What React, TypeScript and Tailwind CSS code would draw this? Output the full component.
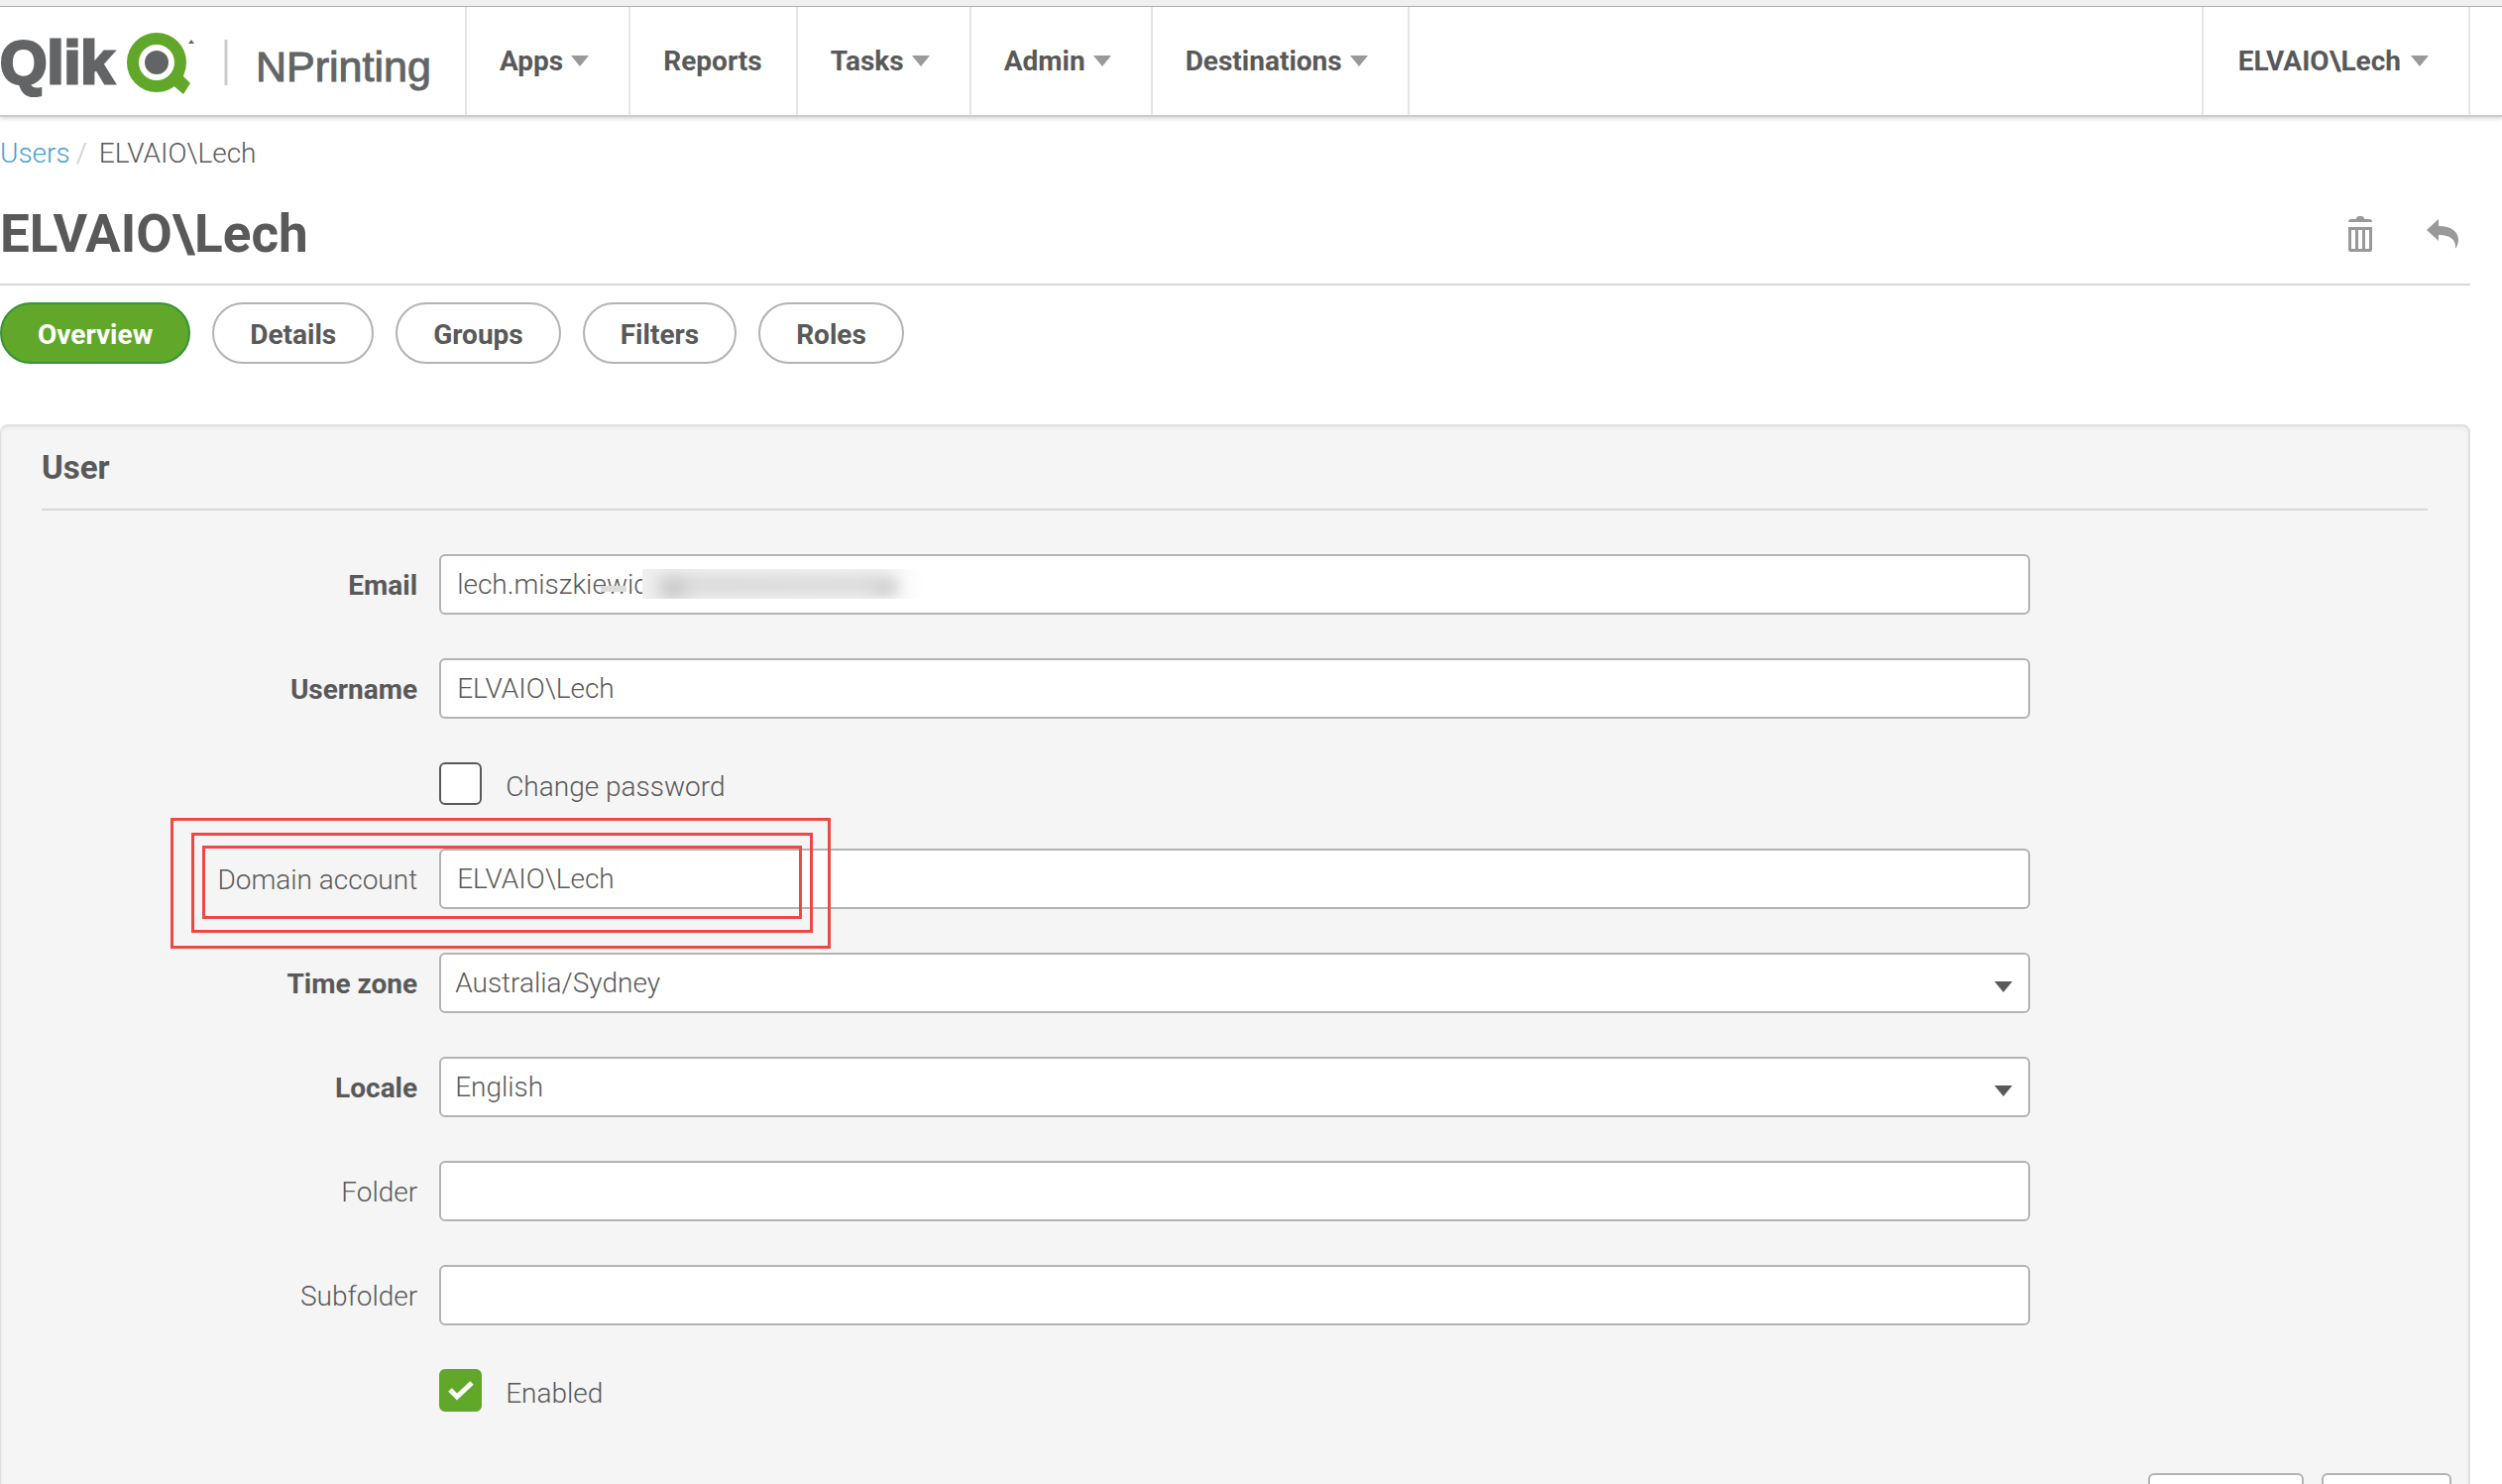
import type { ReactNode } from "react";

const navItems = [
  { label: "Apps", menu: true },
  { label: "Reports", menu: false },
  { label: "Tasks", menu: true },
  { label: "Admin", menu: true },
  { label: "Destinations", menu: true },
];

const tabs = ["Overview", "Details", "Groups", "Filters", "Roles"];

const fieldClass =
  "block h-[61px] w-full rounded-md border-2 border-[#b3b3b3] bg-white px-4 text-[28px] font-light text-[#595959]";

const formButtonClass = "h-[61px] rounded-md border-2 border-[#b3b3b3] bg-white";

function Caret({ className }: { className: string }) {
  return (
    <svg className={className} width="18" height="11" viewBox="0 0 18 11" aria-hidden="true">
      <path d="M0 0h18L9 11z" fill="currentColor" />
    </svg>
  );
}

function Logo() {
  return (
    <svg width="440" height="90" viewBox="0 0 440 90" role="img" aria-label="Qlik NPrinting">
      <g fill="#636466" fontFamily="'Liberation Sans', sans-serif">
        <text x="0" y="67" fontSize="61" fontWeight="700" stroke="#636466" strokeWidth="3">
          Qlik
        </text>
        <circle cx="158" cy="46" r="12" />
        <path d="M193 23l3 4h-6z" />
        <text x="258" y="65" fontSize="43" stroke="#636466" strokeWidth="1">
          NPrinting
        </text>
      </g>
      <circle cx="158" cy="46" r="24" fill="none" stroke="#61a729" strokeWidth="12" />
      <path d="M172 67l11-9 9 9-7 11z" fill="#61a729" />
      <path d="M228 23v46" stroke="#cccccc" strokeWidth="3" />
    </svg>
  );
}

type RowProps = { label: string; id: string; required?: boolean; children: ReactNode };

function Row({ label, id, required, children }: RowProps) {
  return (
    <div className="grid grid-cols-12 items-center">
      <label
        htmlFor={id}
        className={`col-span-2 pr-[22px] pt-0.5 text-right ${required ? "font-bold" : "font-light"}`}
      >
        {label}
      </label>
      <div className="relative col-span-8">{children}</div>
    </div>
  );
}

function SelectField({ id, value }: { id: string; value: string }) {
  return (
    <>
      <select id={id} className={`${fieldClass} appearance-none pl-3.5`} defaultValue={value}>
        <option>{value}</option>
      </select>
      <Caret className="pointer-events-none absolute right-[18px] top-[29px]" />
    </>
  );
}

function CheckField({ id, label, checked }: { id: string; label: string; checked?: boolean }) {
  return (
    <div className="grid grid-cols-12">
      <div className="relative col-span-8 col-start-3 flex h-[43px] items-center">
        <input
          id={id}
          type="checkbox"
          defaultChecked={checked}
          className="size-[43px] appearance-none rounded-md border-2 border-[#595959] bg-white checked:border-[#61a729] checked:bg-[#61a729]"
        />
        {checked && (
          <svg className="pointer-events-none absolute left-2 top-2.5" width="28" height="24" viewBox="0 0 28 24">
            <path d="M3 11l7 7L25 4" fill="none" stroke="white" strokeWidth="5" />
          </svg>
        )}
        <label htmlFor={id} className="pl-6 pt-1.5 font-light">
          {label}
        </label>
      </div>
    </div>
  );
}

export default function App() {
  return (
    <div className="h-screen overflow-hidden bg-white font-['Roboto',sans-serif] text-[28px] leading-9 text-[#595959]">
      <div className="h-[7px] border-b border-[#b0b0b0] bg-[#f0f0f0]" />
      <header className="flex h-[111px] border-b-2 border-[#cccccc] pr-8 shadow-[0_2px_4px_rgba(0,0,0,0.15)]">
        <a href="#" className="flex w-[471px] items-center border-r-2 border-[#e5e5e5]">
          <Logo />
        </a>
        <nav className="flex">
          {navItems.map((item) => (
            <button
              key={item.label}
              className={`flex items-center gap-2 border-r-2 border-[#e5e5e5] pl-[33px] font-bold ${item.menu ? "pr-10" : "pr-[34px]"}`}
            >
              {item.label}
              {item.menu && <Caret className="text-[#999999]" />}
            </button>
          ))}
        </nav>
        <button className="ml-auto flex items-center gap-2.5 border-x-2 border-[#e5e5e5] pl-[35px] pr-10 font-bold">
          ELVAIO\Lech
          <Caret className="text-[#999999]" />
        </button>
      </header>

      <main className="pr-8">
        <div className="flex gap-1.5 pt-[19px] font-light">
          <a href="#" className="text-[#4a9fd0]">
            Users
          </a>
          <span className="text-[#cccccc]">/</span>
          <span className="pl-1.5">ELVAIO\Lech</span>
        </div>

        <div className="flex h-[115px] items-center justify-between border-b-2 border-[#d9d9d9] pt-[13px]">
          <h1 className="text-[53px] font-bold leading-[60px]">ELVAIO\Lech</h1>
          <div className="flex items-center gap-[55px] pr-3 text-[#999999]">
            <button aria-label="Delete">
              <svg width="24" height="36" viewBox="0 0 24 36" fill="currentColor">
                <path d="M0 6q0-3 3-3h5q0-3 3-3h2q3 0 3 3h5q3 0 3 3z" />
                <path fillRule="evenodd" d="M0 11h24v23q0 2-2 2H2q-2 0-2-2zM3 14v19h4V14zM10 14v19h4V14zM17 14v19h4V14z" />
              </svg>
            </button>
            <button aria-label="Undo">
              <svg width="32" height="30" viewBox="0 0 32 30" fill="currentColor">
                <path d="M0 11L12 0v7c13 0 20 6 20 14 0 3-1 6-3 9 1-9-5-14-17-14v6z" />
              </svg>
            </button>
          </div>
        </div>

        <div className="flex gap-[22px] pt-[17px]">
          {tabs.map((tab) => (
            <button
              key={tab}
              className={`h-[62px] rounded-full border-2 px-9 pt-1 font-bold ${
                tab === "Overview" ? "border-[#36933a] bg-[#61a729] text-white" : "border-[#b3b3b3] bg-white"
              }`}
            >
              {tab}
            </button>
          ))}
        </div>

        <section className="mt-[61px] rounded-lg border-2 border-l border-[#e0e0e0] bg-[#f5f5f5] px-[41px] pb-8 shadow-[inset_0_2px_4px_rgba(0,0,0,0.05)]">
          <h2 className="border-b-2 border-[#d9d9d9] pb-5 pt-[21px] text-[33px] font-bold leading-[42px]">User</h2>

          <form className="flex flex-col gap-11 pt-11">
            <Row label="Email" id="email" required>
              <input id="email" className={fieldClass} defaultValue="lech.miszkiewic" />
              {/* redacted part of the address */}
              <div className="absolute left-[163px] top-8 h-1.5 w-[26px] bg-[#dddddd]" />
              <div className="absolute left-[205px] top-[15px] h-[30px] w-[300px] overflow-hidden bg-gradient-to-r from-[#efefef] via-[#f2f2f2] via-75% to-white to-95%">
                <div className="absolute left-4 top-2 h-4 w-[240px] bg-[#d6d6d6] blur-[8px]" />
                <div className="absolute left-5 top-3 h-4 w-6 rounded-full bg-[#c4c4c4] blur-[8px]" />
                <div className="absolute left-[232px] top-3 h-3.5 w-6 rounded-full bg-[#cfd2cf] blur-[7px]" />
              </div>
            </Row>
            <Row label="Username" id="username" required>
              <input id="username" className={fieldClass} defaultValue="ELVAIO\Lech" />
            </Row>
            <CheckField id="change-password" label="Change password" />
            <div className="relative">
              <Row label="Domain account" id="domain">
                <input id="domain" className={fieldClass} defaultValue="ELVAIO\Lech" />
              </Row>
              {/* callout frames around the domain account */}
              <div className="pointer-events-none absolute -top-[31px] left-[130px] h-[132px] w-[666px] border-[3px] border-[#ea4a44]" />
              <div className="pointer-events-none absolute -top-4 left-[151px] h-[101px] w-[627px] border-[3px] border-[#ea4a44]" />
              <div className="pointer-events-none absolute -top-[3px] left-[162px] h-[74px] w-[605px] border-[3px] border-[#ea4a44]" />
            </div>
            <Row label="Time zone" id="timezone" required>
              <SelectField id="timezone" value="Australia/Sydney" />
            </Row>
            <Row label="Locale" id="locale" required>
              <SelectField id="locale" value="English" />
            </Row>
            <Row label="Folder" id="folder">
              <input id="folder" className={fieldClass} />
            </Row>
            <Row label="Subfolder" id="subfolder">
              <input id="subfolder" className={fieldClass} />
            </Row>
            <CheckField id="enabled" label="Enabled" checked />
          </form>

          <div className="-mr-6 flex justify-end gap-[18px] pt-[62px]">
            <button aria-label="Cancel" className={`${formButtonClass} w-[157px]`} />
            <button aria-label="Save" className={`${formButtonClass} w-[131px]`} />
          </div>
        </section>
      </main>
    </div>
  );
}
